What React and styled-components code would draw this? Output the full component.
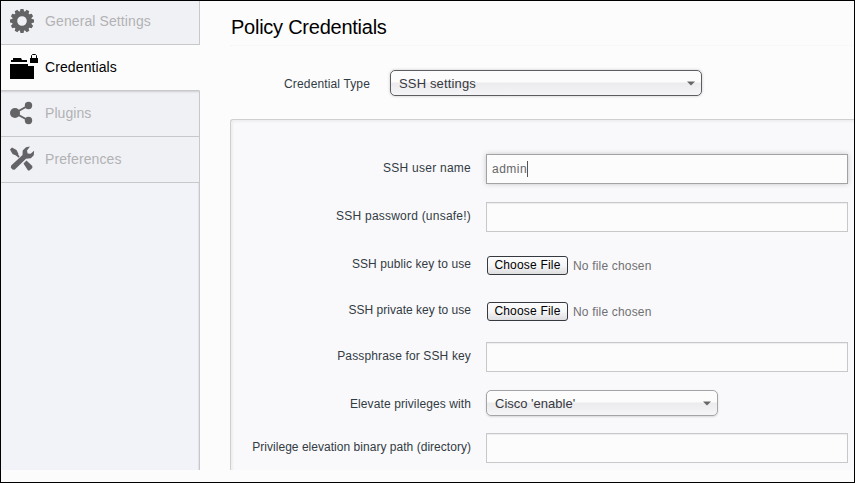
import React from 'react';
import styled, { createGlobalStyle, css } from 'styled-components';

const GlobalStyle = createGlobalStyle`
  * { box-sizing: border-box; }
  body { margin: 0; background: #fcfcfd; font-family: "Liberation Sans", Arial, sans-serif; }
  input, button { font-family: inherit; }
`;

const Frame = styled.div`
  width: 855px;
  height: 483px;
  border: 1px solid #000;
  background: #fcfcfd;
  overflow: hidden;
`;

const Page = styled.div`
  display: flex;
  height: 469px;
`;

const Sidebar = styled.nav`
  flex: 0 0 199px;
  display: flex;
  flex-direction: column;
  background: #f2f3f8;
`;

const NavItem = styled.a`
  display: flex;
  align-items: center;
  height: ${(p) => p.$height}px;
  padding: 0 0 ${(p) => p.$lift}px 8px;
  border-bottom: 1px solid #c8c8ca;
  border-right: 1px solid ${(p) => (p.$active ? '#fcfcfd' : '#c8c8ca')};
  background: ${(p) => (p.$active ? '#fcfcfd' : '#f0f1f5')};
  color: ${(p) => (p.$active ? '#000' : '#b2b2b4')};
  font-size: 14px;
  letter-spacing: ${(p) => p.$spacing}px;
  line-height: 18px;
  ${(p) => p.$shadow && css`box-shadow: inset 0 2px 2px -1px #cfcfd2;`}
`;

const IconSlot = styled.span`
  flex: 0 0 36px;
  display: flex;
  align-items: center;
  svg { display: block; }
`;

const SidebarFill = styled.div`
  flex: 1;
  border-right: 1px solid #c8c8ca;
  box-shadow: inset -2px 0 1px -1px #e2e2e6;
`;

const Main = styled.main`
  flex: 1;
  min-width: 0;
  display: flex;
  flex-direction: column;
  padding-left: 30px;
`;

const Title = styled.h1`
  margin: 0;
  height: 45px;
  padding: 14px 0 0 1px;
  border-bottom: 1px dotted #f4f4f5;
  color: #000;
  font-size: 20px;
  font-weight: 400;
  letter-spacing: -0.25px;
  line-height: 24px;
`;

const TypeRow = styled.div`
  display: flex;
  align-items: center;
  height: 26px;
  margin: 24px 0 23px;
`;

const Label = styled.label`
  flex: 0 0 ${(p) => p.$width}px;
  margin-right: ${(p) => p.$gap}px;
  padding-top: ${(p) => Math.max(-p.$lift, 0)}px;
  padding-bottom: ${(p) => Math.max(p.$lift, 0)}px;
  color: #333b43;
  font-size: 12px;
  letter-spacing: ${(p) => p.$spacing}px;
  line-height: 16px;
  text-align: right;
  white-space: nowrap;
`;

const SelectBox = styled.div`
  display: flex;
  align-items: center;
  justify-content: space-between;
  width: ${(p) => p.$width}px;
  height: 26px;
  padding: 1px 6px 0 8px;
  border: 1px solid ${(p) => (p.$focused ? '#5d5d60' : '#a4a4a6')};
  border-radius: 5px;
  background: linear-gradient(#fcfcfd 0, #fcfcfd 46%, #ebebed 50%, #f5f5f7 100%);
  box-shadow: ${(p) => (p.$focused ? '0 0 3px #c4c4c6' : '0 1px 2px #d8d8da')};
  color: #38383e;
  font-size: 13px;
  letter-spacing: ${(p) => p.$spacing}px;
  svg { display: block; }
`;

const Panel = styled.section`
  flex: 1;
  min-height: 0;
  padding: 34px 0 0 21px;
  border: 1px solid #cfcfd1;
  border-width: 1px 0 0 1px;
  border-radius: 3px 0 0 0;
  background: #f9f9fb;
  box-shadow: inset 2px 2px 2px #efeff1;
`;

const Row = styled.div`
  display: flex;
  align-items: center;
  height: ${(p) => p.$height}px;
  margin-bottom: ${(p) => p.$after}px;
`;

const TextField = styled.div`
  display: flex;
  align-items: center;
  width: 362px;
  height: 30px;
  padding-left: 5px;
  border: 1px solid ${(p) => (p.$focused ? '#a2a2a4' : '#c8c8ca')};
  background: #fcfcfd;
  box-shadow: ${(p) => (p.$focused ? '0 0 5px #c8c8ca' : 'inset 0 1px 1px #ededef')};
  color: #666669;
  font-size: 12px;
  letter-spacing: 0.5px;
`;

const Caret = styled.span`
  width: 1px;
  height: 16px;
  background: #555;
`;

const FileButton = styled.button`
  width: 81px;
  height: 19px;
  margin-left: 1px;
  padding: 0;
  border: 1px solid #353a40;
  border-radius: 3px;
  background: linear-gradient(#fcfcfd 0, #f6f6f7 50%, #dedee0 100%);
  color: #000;
  font-size: 12px;
  letter-spacing: 0.2px;
  line-height: 17px;
  white-space: nowrap;
`;

const FileStatus = styled.span`
  margin-left: 5px;
  padding-top: 1px;
  color: #707072;
  font-size: 12px;
  letter-spacing: 0.18px;
  line-height: 17px;
`;

const gearTeeth = Array.from({ length: 12 }, (_, i) => i * 30);

const GearIcon = () => (
  <svg width="26" height="26" viewBox="0 0 26 26" fill="#646466">
    {gearTeeth.map((a) => (
      <path key={a} d="M10.8 4 L11.500 1 H14.500 L15.200 4Z" transform={`rotate(${a} 13 13)`} />
    ))}
    <circle cx="13" cy="13" r="7.4" fill="none" stroke="#646466" strokeWidth="5.2" />
  </svg>
);

const FolderLockIcon = () => (
  <svg width="30" height="28" viewBox="0 0 30 28">
    <path d="M2 9V7h2V5h8l1 2h5v2zM1 11h18v2h6v13H1z" fill="#000" />
    <path d="M21 5h8v5h-8z" fill="#000" />
    <path d="M22.500 5V2.500l1-1h3l1 1V5" fill="none" stroke="#000" />
  </svg>
);

const ShareIcon = () => (
  <svg width="26" height="26" viewBox="0 0 26 26" fill="#646466">
    <path d="M19.500 5.500 6 13l13.500 7.500" fill="none" stroke="#646466" strokeWidth="2" />
    <circle cx="6" cy="13" r="5" />
    <circle cx="19.500" cy="5.500" r="3.700" />
    <circle cx="19.500" cy="20.500" r="3.700" />
  </svg>
);

const ToolsIcon = () => (
  <svg width="26" height="26" viewBox="0 0 26 26" fill="#646466">
    <path d="M1 3.500 3 1.500 7.500 4 9.500 8 8.500 10 7 9.500 3.500 8z" />
    <path d="M7.500 8.500 10 11" stroke="#646466" strokeWidth="1.800" />
    <path d="M14.500 17.500 17.500 14.500 23.300 20v2L20.500 24.500h-1.500z" />
    <path d="M2.200 19.500 13.500 9 13.700 4.500 17 1.200l4-.700-3 4 .600 3 3 .200 3.500-3-.300 4.500-3 3-4.800.500L5.600 23.800l-2.200-.200-1.600-2z" />
  </svg>
);

const Arrow = () => (
  <svg width="8" height="5" viewBox="0 0 8 5"><path d="M0 0.500h8L4 4.500z" fill="#666668" /></svg>
);

const NAV = [
  { text: 'General Settings', Icon: GearIcon, height: 44, lift: 3, spacing: 0.1 },
  { text: 'Credentials', Icon: FolderLockIcon, height: 46, lift: 2, spacing: 0.1, active: true },
  { text: 'Plugins', Icon: ShareIcon, height: 46, lift: 2, spacing: 0.05, shadow: true },
  { text: 'Preferences', Icon: ToolsIcon, height: 46, lift: 2, spacing: 0.1 },
];

const FIELDS = [
  { text: 'SSH user name', spacing: 0.25, lift: 2, kind: 'text', value: 'admin', height: 30, after: 18 },
  { text: 'SSH password (unsafe!)', spacing: 0.22, lift: 2, kind: 'text', height: 30, after: 24 },
  { text: 'SSH public key to use', spacing: 0.08, lift: 3, kind: 'file', height: 19, after: 27 },
  { text: 'SSH private key to use', spacing: 0.02, lift: 3, kind: 'file', height: 19, after: 21 },
  { text: 'Passphrase for SSH key', spacing: 0.14, lift: 2, kind: 'text', height: 30, after: 18 },
  { text: 'Elevate privileges with', spacing: 0.1, lift: -1, kind: 'select', value: "Cisco 'enable'", height: 26, after: 17 },
  { text: 'Privilege elevation binary path (directory)', spacing: 0.03, lift: 2, kind: 'text', height: 30, after: 0 },
];

function Control({ field }) {
  if (field.kind === 'file') {
    return (
      <>
        <FileButton type="button">Choose File</FileButton>
        <FileStatus>No file chosen</FileStatus>
      </>
    );
  }
  if (field.kind === 'select') {
    return (
      <SelectBox $width={232} $spacing={0}>
        <span>{field.value}</span>
        <Arrow />
      </SelectBox>
    );
  }
  return (
    <TextField $focused={Boolean(field.value)}>
      {field.value}
      {field.value && <Caret />}
    </TextField>
  );
}

export default function App() {
  return (
    <>
      <GlobalStyle />
      <Frame>
        <Page>
          <Sidebar>
            {NAV.map(({ text, Icon, height, lift, active, shadow, spacing }) => (
              <NavItem
                key={text}
                $height={height}
                $lift={lift}
                $active={active}
                $shadow={shadow}
                $spacing={spacing}
              >
                <IconSlot><Icon /></IconSlot>
                {text}
              </NavItem>
            ))}
            <SidebarFill />
          </Sidebar>
          <Main>
            <Title>Policy Credentials</Title>
            <TypeRow>
              <Label $width={140} $gap={20} $lift={-1} $spacing={0.14}>Credential Type</Label>
              <SelectBox $width={312} $focused $spacing={0.15}>
                <span>SSH settings</span>
                <Arrow />
              </SelectBox>
            </TypeRow>
            <Panel>
              {FIELDS.map((field) => (
                <Row key={field.text} $height={field.height} $after={field.after}>
                  <Label $width={219} $gap={15} $lift={field.lift} $spacing={field.spacing}>
                    {field.text}
                  </Label>
                  <Control field={field} />
                </Row>
              ))}
            </Panel>
          </Main>
        </Page>
      </Frame>
    </>
  );
}
